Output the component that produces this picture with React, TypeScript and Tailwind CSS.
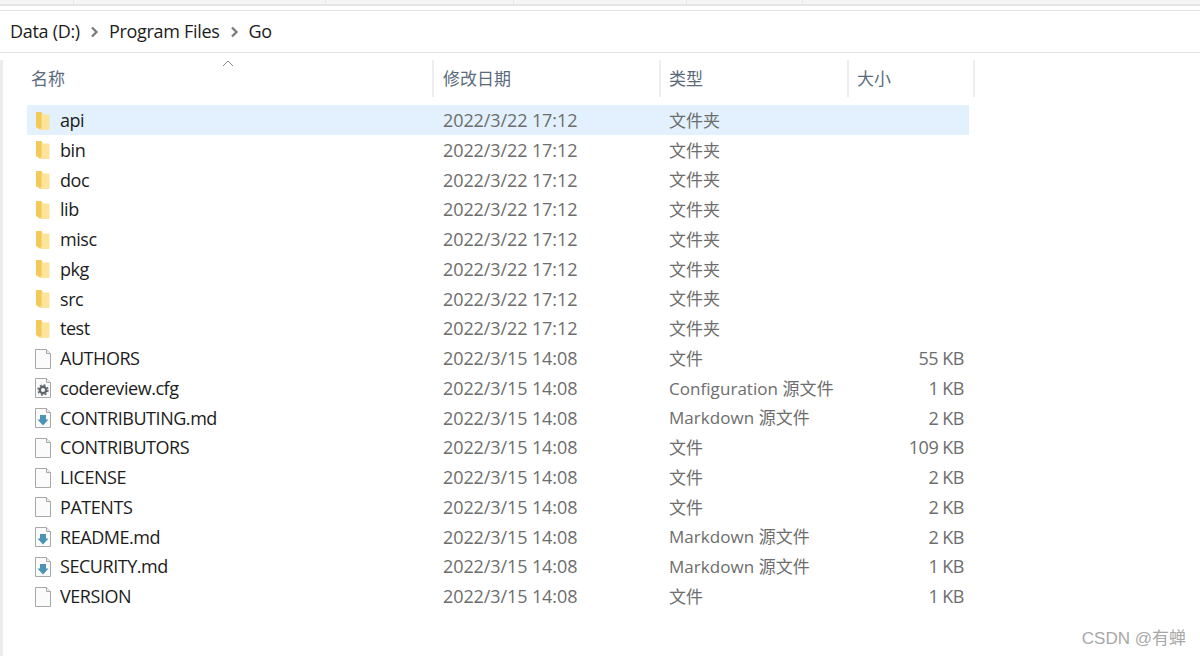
const CHEVRON = (
  <svg width="9" height="12" viewBox="0 0 9 12" className="mx-[10px]">
    <path d="M2 1.500l4.500 4.500-4.500 4.500" fill="none" stroke="#7d7d7d" strokeWidth="2.400" />
  </svg>
);

type Kind = 'folder' | 'file' | 'cfg' | 'md';

const FILES: { name: string; date: string; type: string; size: string; kind: Kind }[] = [
  { name: 'api', date: '2022/3/22 17:12', type: '文件夹', size: '', kind: 'folder' },
  { name: 'bin', date: '2022/3/22 17:12', type: '文件夹', size: '', kind: 'folder' },
  { name: 'doc', date: '2022/3/22 17:12', type: '文件夹', size: '', kind: 'folder' },
  { name: 'lib', date: '2022/3/22 17:12', type: '文件夹', size: '', kind: 'folder' },
  { name: 'misc', date: '2022/3/22 17:12', type: '文件夹', size: '', kind: 'folder' },
  { name: 'pkg', date: '2022/3/22 17:12', type: '文件夹', size: '', kind: 'folder' },
  { name: 'src', date: '2022/3/22 17:12', type: '文件夹', size: '', kind: 'folder' },
  { name: 'test', date: '2022/3/22 17:12', type: '文件夹', size: '', kind: 'folder' },
  { name: 'AUTHORS', date: '2022/3/15 14:08', type: '文件', size: '55 KB', kind: 'file' },
  { name: 'codereview.cfg', date: '2022/3/15 14:08', type: 'Configuration 源文件', size: '1 KB', kind: 'cfg' },
  { name: 'CONTRIBUTING.md', date: '2022/3/15 14:08', type: 'Markdown 源文件', size: '2 KB', kind: 'md' },
  { name: 'CONTRIBUTORS', date: '2022/3/15 14:08', type: '文件', size: '109 KB', kind: 'file' },
  { name: 'LICENSE', date: '2022/3/15 14:08', type: '文件', size: '2 KB', kind: 'file' },
  { name: 'PATENTS', date: '2022/3/15 14:08', type: '文件', size: '2 KB', kind: 'file' },
  { name: 'README.md', date: '2022/3/15 14:08', type: 'Markdown 源文件', size: '2 KB', kind: 'md' },
  { name: 'SECURITY.md', date: '2022/3/15 14:08', type: 'Markdown 源文件', size: '1 KB', kind: 'md' },
  { name: 'VERSION', date: '2022/3/15 14:08', type: '文件', size: '1 KB', kind: 'file' },
];

function FileIcon({ kind }: { kind: Kind }) {
  if (kind === 'folder') {
    return (
      <svg width="18" height="20" viewBox="0 0 18 20" className="block">
        <path d="M2 1h5.500l1 2.500V18H5l-3-2z" fill="#f3c95a" />
        <path d="M7.500 3.500h7c.5 0 1 .4 1 1V18c0 .6-.5 1-1 1H4.500l3-2z" fill="#fce49a" />
      </svg>
    );
  }
  return (
    <svg width="18" height="20" viewBox="0 0 18 20" className="block">
      <path d="M1.500.5h11l4 4v15h-15z" fill="#fbfbfb" stroke="#a8a8a8" />
      <path d="M12.500.5v4h4" fill="#eeeeee" stroke="#a8a8a8" />
      {kind === 'cfg' && (
        <g>
          <circle cx="9" cy="12" r="3.200" fill="none" stroke="#5f676d" strokeWidth="2.400" />
          <circle cx="9" cy="12" r="5" fill="none" stroke="#5f676d" strokeWidth="1.400" strokeDasharray="2 1.930" />
        </g>
      )}
      {kind === 'md' && <path d="M6 7h6v4.500h2.500L9 17.500l-5.500-6H6z" fill="#4a93b5" />}
    </svg>
  );
}

function HeaderCell({ label, className }: { label: string; className: string }) {
  return (
    <div className={`flex items-center border-r-2 border-[#eeeeee] ${className}`}>
      <span className="text-[#5b6b7c]">{label}</span>
    </div>
  );
}

export default function App() {
  return (
    <div
      className="flex h-[656px] w-[1200px] flex-col overflow-hidden bg-white text-[18px] text-[#1c1c1c]"
      style={{ fontFamily: '"Open Sans", "Noto Sans CJK SC", sans-serif' }}
    >
      {/* leftover of the ribbon above the address bar */}
      <div className="flex h-[6px] shrink-0 border-b-2 border-[#e4e4e4] bg-[#f5f5f5]">
        <div className="w-[74px] border-r border-[#e8e8e8]" />
        <div className="w-[252px] border-r border-[#e8e8e8]" />
        <div className="w-[188px] border-r border-[#e8e8e8]" />
        <div className="w-[173px] border-r border-[#e8e8e8]" />
        <div className="w-[116px] border-r border-[#e8e8e8]" />
      </div>

      <div className="mt-1 flex h-[43px] shrink-0 items-center border-y border-[#e3e3e3] pl-[10px] tracking-[-0.3px]">
        <span>Data (D:)</span>
        {CHEVRON}
        <span>Program Files</span>
        {CHEVRON}
        <span>Go</span>
      </div>

      <div className="flex flex-1 pt-[7px]">
        <div className="h-full w-[3px] bg-[#ececec]" />
        <div className="ml-[24px] w-[948px]">
          <div className="relative flex h-[37px] text-[17px]">
            <svg width="12" height="7" viewBox="0 0 12 7" className="absolute top-0 left-[195px]">
              <path d="M1 6l5-5 5 5" fill="none" stroke="#8a8a8a" />
            </svg>
            <HeaderCell label="名称" className="w-[407px] pl-[4px]" />
            <HeaderCell label="修改日期" className="w-[227px] pl-[9px]" />
            <HeaderCell label="类型" className="w-[188px] pl-[8px]" />
            <HeaderCell label="大小" className="w-[126px] pl-[8px]" />
          </div>
          <div className="mt-[8px] flex w-[942px] flex-col">
            {FILES.map((f, i) => (
              <div key={f.name} className={`flex h-[29.75px] items-center pt-[1.5px] ${i === 0 ? 'bg-[#e2f1fd]' : ''}`}>
                <div className="flex w-[416px] items-center">
                  <div className="ml-[7px] w-[26px]">
                    <FileIcon kind={f.kind} />
                  </div>
                  <span className="tracking-[-0.45px]">{f.name}</span>
                </div>
                <div className="w-[226px] tracking-[-0.1px] text-[#6d6d6d]">{f.date}</div>
                <div className="w-[204px] whitespace-nowrap text-[17px] tracking-[0.05px] text-[#6d6d6d]">{f.type}</div>
                <div className="w-[91px] text-right tracking-[-0.5px] text-[#6d6d6d]">{f.size}</div>
              </div>
            ))}
          </div>
        </div>
      </div>

      <div
        className="absolute top-[626px] right-[14px] text-[17px] text-[#a8a8a8]"
        style={{ fontFamily: '"Liberation Sans", "Noto Sans CJK SC", sans-serif' }}
      >
        CSDN @有蝉
      </div>
    </div>
  );
}
